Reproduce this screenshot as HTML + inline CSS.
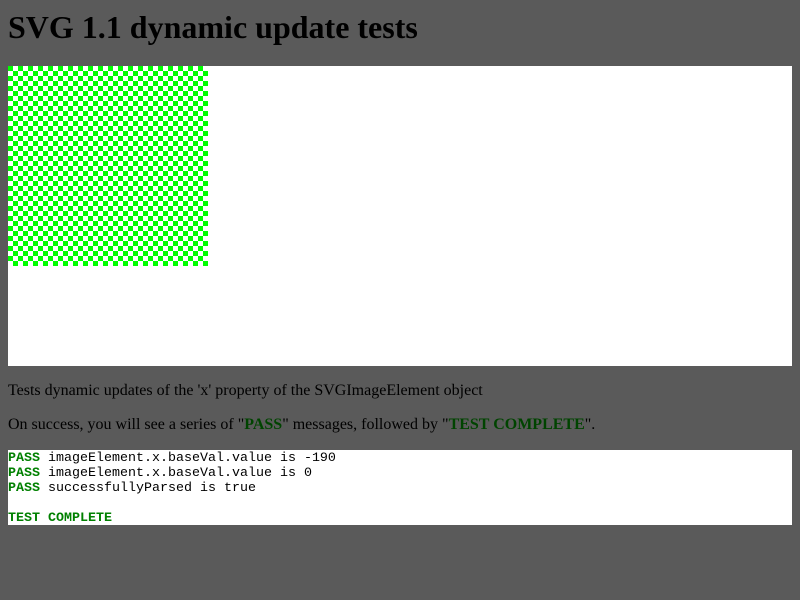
<!DOCTYPE html>
<html><head><style>
body{margin:0;background:#5a5a5a;width:800px;height:600px;overflow:hidden;font-family:"Liberation Serif",serif;}
h1{position:absolute;left:8px;top:9px;margin:0;font-size:32px;font-weight:bold;color:#000;}
.svgbox{position:absolute;left:8px;top:66px;width:784px;height:300px;background:#fff;}
p{position:absolute;left:8px;margin:0;font-size:16px;color:#000;}
b.g{color:#004400;}
.out{position:absolute;left:8px;top:450px;width:784px;height:75px;background:#fff;font-family:"Liberation Mono",monospace;font-size:13.33px;line-height:15px;white-space:pre;}
.out div{position:relative;top:1px;}
.p{color:#008000;font-weight:bold;}
</style></head><body>
<h1>SVG 1.1 dynamic update tests</h1>
<div class="svgbox"><svg width="200" height="200"><defs><pattern id="c" width="10" height="10" patternUnits="userSpaceOnUse"><rect width="10" height="10" fill="#fff"/><rect width="5" height="5" fill="#00ff00"/><rect x="5" y="5" width="5" height="5" fill="#00ff00"/></pattern></defs><rect width="200" height="200" fill="url(#c)"/></svg></div>
<p style="top:382px">Tests dynamic updates of the 'x' property of the SVGImageElement object</p>
<p style="top:416px">On success, you will see a series of "<b class="g">PASS</b>" messages, followed by "<b class="g">TEST COMPLETE</b>".</p>
<div class="out"><div><span class="p">PASS</span> imageElement.x.baseVal.value is -190
<span class="p">PASS</span> imageElement.x.baseVal.value is 0
<span class="p">PASS</span> successfullyParsed is true

<span class="p">TEST COMPLETE</span></div></div>
</body></html>
